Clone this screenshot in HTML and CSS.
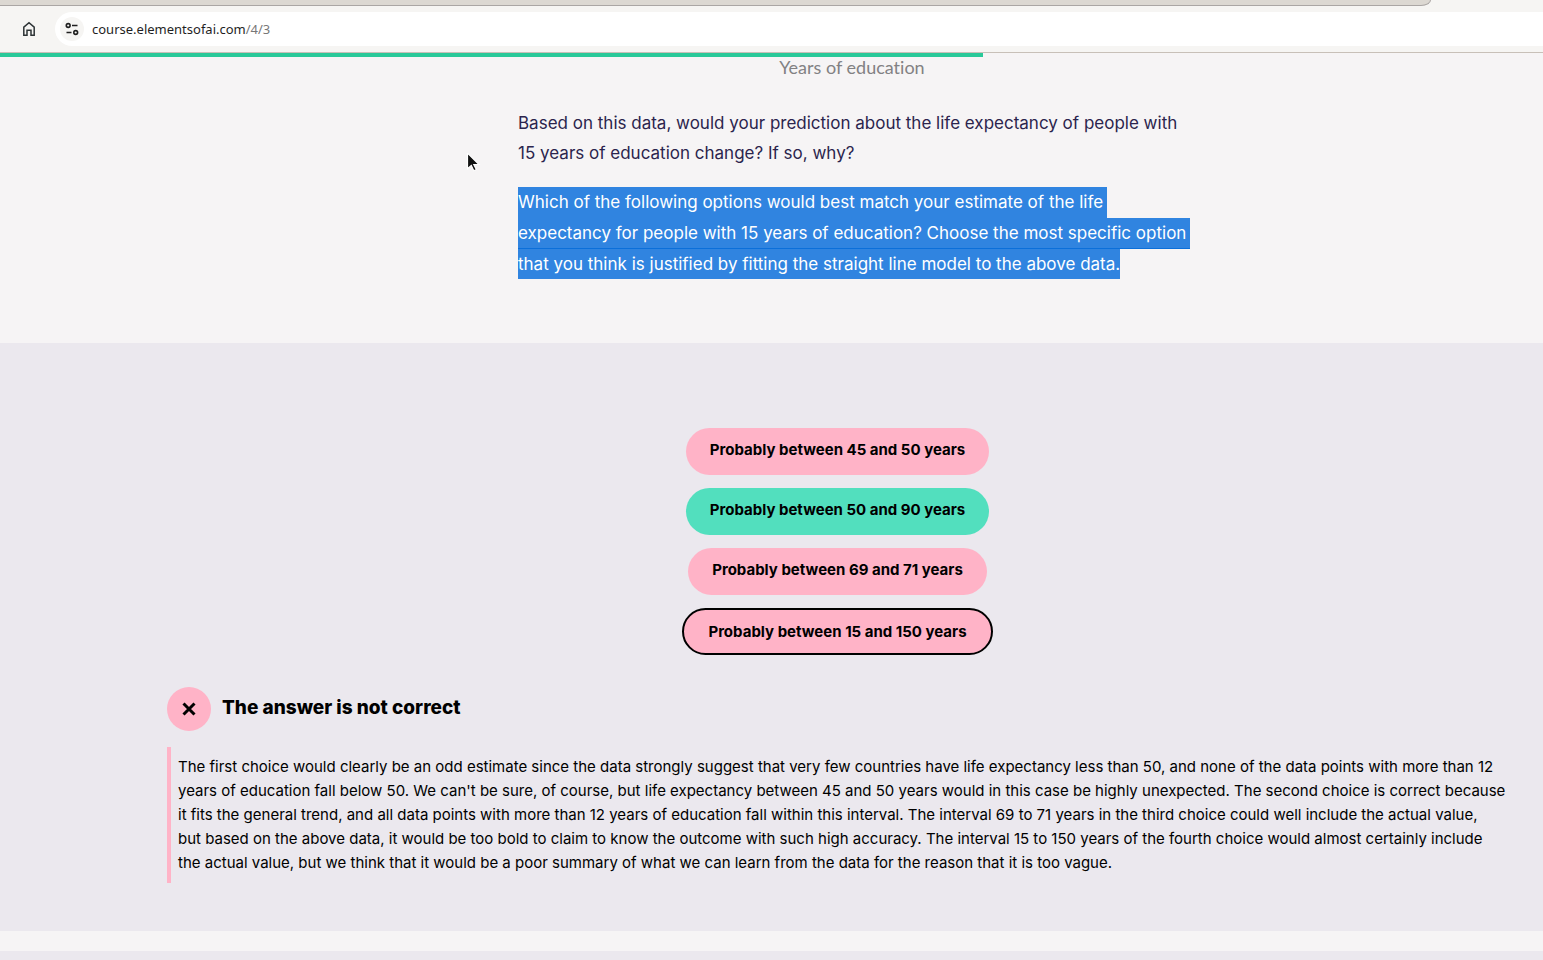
FILE: index.html
```html
<!DOCTYPE html>
<html lang="en">
<head>
<meta charset="utf-8">
<title>Elements of AI</title>
<link rel="stylesheet" href="styles.css">
</head>
<body>
<header class="browser">
  <div class="tab-strip"></div>
  <div class="toolbar">
    <button class="home" type="button" aria-label="Home">
      <svg width="14" height="16" viewBox="0 0 14 16" fill="none" stroke="#2e3436" stroke-width="1.5"><path d="M1.800 14.200V6.200L7 1.800l5.200 4.400v8H9V9.300H5v4.900z"/></svg>
    </button>
    <div class="address">
      <button class="site-info" type="button" aria-label="Site information">
        <svg width="14" height="14" viewBox="0 0 14 14" fill="none" stroke="#1f1f1f" stroke-width="1.6"><circle cx="3.2" cy="3.5" r="1.9"/><path d="M7 3.500h5.500M1.500 10.500h5"/><circle cx="10.7" cy="10.5" r="1.9"/></svg>
      </button>
      <a class="url" href="#">course.elementsofai.com<span class="path">/4/3</span></a>
    </div>
  </div>
</header>
<div class="progress"><div class="progress-bar" style="width: 63.7%"></div></div>
<main>
  <section class="article">
    <div class="column">
      <p class="axis-label">Years of education</p>
      <p class="question">Based on this data, would your prediction about the life expectancy of people with<br>15 years of education change? If so, why?</p>
      <p class="selected">
        <span>Which of the following options would best match your estimate of the life</span>
        <span>expectancy for people with 15 years of education? Choose the most specific option</span>
        <span>that you think is justified by fitting the straight line model to the above data.</span>
      </p>
    </div>
    <svg class="pointer" width="16" height="22" viewBox="0 0 16 22"><path d="M1.500 0v15.600l3.800-3.200 2.500 5.300 2.500-1.200-2.500-5H13z" fill="#111" stroke="#fff" stroke-width="1.200"/></svg>
  </section>
  <section class="quiz">
    <div class="options">
      <button class="option" type="button">Probably between 45 and 50 years</button>
      <button class="option correct" type="button">Probably between 50 and 90 years</button>
      <button class="option" type="button">Probably between 69 and 71 years</button>
      <button class="option chosen" type="button">Probably between 15 and 150 years</button>
    </div>
    <div class="result">
      <span class="badge"><svg width="14" height="14" viewBox="0 0 14 14" fill="none" stroke="#000" stroke-width="3"><path d="M1.500 1.500l11 11M12.500 1.500l-11 11"/></svg></span>
      <h2>The answer is not correct</h2>
    </div>
    <p class="explanation">The first choice would clearly be an odd estimate since the data strongly suggest that very few countries have life expectancy less than 50, and none of the data points with more than 12<br>years of education fall below 50. We can't be sure, of course, but life expectancy between 45 and 50 years would in this case be highly unexpected. The second choice is correct because<br>it fits the general trend, and all data points with more than 12 years of education fall within this interval. The interval 69 to 71 years in the third choice could well include the actual value,<br>but based on the above data, it would be too bold to claim to know the outcome with such high accuracy. The interval 15 to 150 years of the fourth choice would almost certainly include<br>the actual value, but we think that it would be a poor summary of what we can learn from the data for the reason that it is too vague.</p>
  </section>
  <section class="next"></section>
</main>
</body>
</html>
```
FILE: styles.css
```css
* { box-sizing: border-box; }
body {
  margin: 0;
  min-height: 100vh;
  display: flex;
  flex-direction: column;
  overflow: hidden;
  background: #f6f4f5;
  color: #000;
  font-family: Inter, "Liberation Sans", sans-serif;
}
p, h2 { margin: 0; }
button { border: 0; padding: 0; font: inherit; color: inherit; }

.browser { background: #f6f5f3; border-bottom: 1px solid #c8c0b8; }
.tab-strip {
  height: 6px;
  margin-right: 112px;
  background: #dcd8d2;
  border-bottom: 1px solid #aaa6a4;
  border-right: 1px solid #aaa6a4;
  border-bottom-right-radius: 10px 6px;
}
.toolbar { display: flex; align-items: center; gap: 19px; padding: 6px 0 6px 22px; }
.home { display: flex; background: none; }
.address {
  flex: 1;
  display: flex;
  align-items: center;
  gap: 8px;
  height: 34px;
  padding-left: 5px;
  background: #fff;
  border-radius: 17px 0 0 17px;
}
.site-info {
  display: flex;
  align-items: center;
  justify-content: center;
  width: 24px;
  height: 24px;
  border-radius: 50%;
  background: #f6f5f3;
}
.url { font: 13px/20px "Noto Sans", sans-serif; color: #1f1f1f; text-decoration: none; }
.path { color: #777; }

.progress-bar { height: 4px; background: #29c999; }
main { flex: 1; display: flex; flex-direction: column; }

.article { position: relative; padding: 0 24px 64px 518px; }
.column { max-width: 668px; white-space: nowrap; }
.axis-label { font-family: Lato, sans-serif; font-size: 18px; line-height: 20px; color: #828183; text-align: center; font-variant-ligatures: none; }
.question { margin-top: 31px; font-size: 17px; line-height: 30px; color: #2b244d; }
.selected { margin-top: 19px; font-size: 17px; line-height: 31px; color: #fff; }
.selected span { display: block; width: fit-content; padding-right: 4px; background: #3084e0; }
.selected span:nth-child(2) { box-shadow: inset 0 -1px #0b6fda; }
.selected span:last-child { padding-right: 0; line-height: 30px; }
.pointer { position: absolute; left: 466px; top: 96px; }

.quiz { padding: 85px 0 48px 132px; background: #ebe8ee; }
.options { display: flex; flex-direction: column; align-items: center; gap: 13px; }
.option {
  height: 47px;
  padding: 0 24px 4px;
  border-radius: 24px;
  background: #ffb3c7;
  font-size: 15px;
  font-weight: 700;
}
.correct { background: #52dfbe; }
.chosen { border: 2px solid #000; padding-bottom: 0; }
.result { display: flex; align-items: center; gap: 11px; margin: 32px 0 16px 35px; }
.badge {
  display: flex;
  align-items: center;
  justify-content: center;
  width: 44px;
  height: 44px;
  border-radius: 50%;
  background: #ffb3c7;
}
h2 { padding-bottom: 2px; font-size: 19px; line-height: 24px; font-weight: 800; }
.explanation {
  margin-left: 35px;
  padding: 8px 0 8px 7px;
  border-left: 4px solid #ffb3c7;
  font-size: 15px;
  line-height: 24px;
  white-space: nowrap;
}
.next { flex: 1; margin-top: 20px; background: #ebe8ee; }
```
